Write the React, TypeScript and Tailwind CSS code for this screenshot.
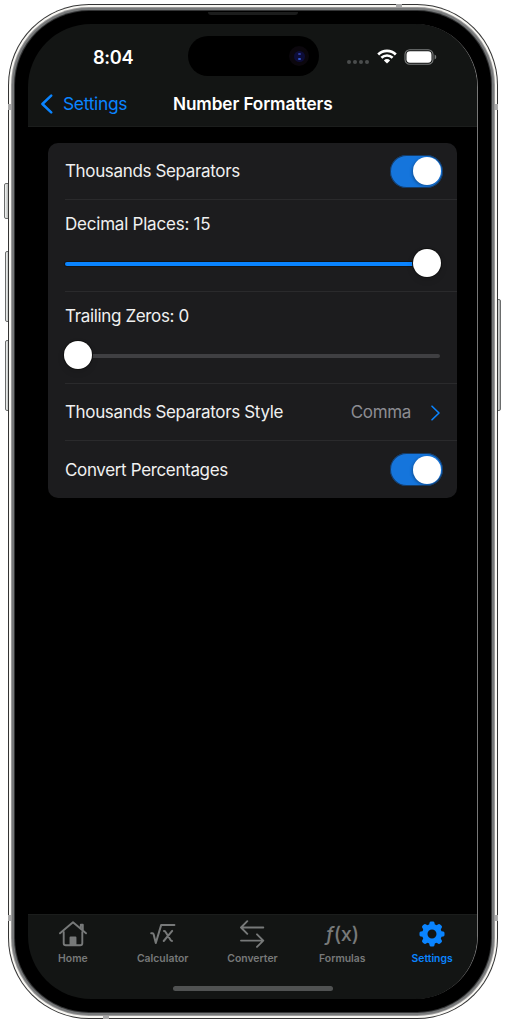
import type { ReactNode } from "react";

function StatusBar() {
  return (
    <div className="relative flex h-[58px] items-start">
      <span className="ml-[65px] mt-[20px] w-[42px] text-[18.2px] font-semibold leading-[27px] tracking-[-0.3px] text-white">
        8:04
      </span>
      <div className="ml-[53px] mt-[12px] flex h-[40px] w-[131px] items-center justify-end rounded-full bg-black pr-[10px]">
        <div className="flex h-[20px] w-[20px] items-center justify-center rounded-full bg-[#0b070d]">
          <div className="flex h-[11px] w-[11px] flex-col items-center justify-center gap-[3px] rounded-full bg-[#0d0d38]">
            <div className="h-[2px] w-[3px] rounded-full bg-[#2d3a9c]" />
            <div className="h-[2px] w-[3px] rounded-full bg-[#2f55c8]" />
          </div>
        </div>
      </div>
      <div className="ml-[28px] mt-[36px] flex gap-[2px]">
        <i className="h-1 w-1 rounded-full bg-[#4b4d4d]" />
        <i className="h-1 w-1 rounded-full bg-[#4b4d4d]" />
        <i className="h-1 w-1 rounded-full bg-[#4b4d4d]" />
        <i className="h-1 w-1 rounded-full bg-[#4b4d4d]" />
      </div>
      <svg className="ml-[8px] mt-[25px] shrink-0" width="20" height="15" viewBox="0 0 20 15" fill="none">
        <path d="M1.2 5.5A12.6 12.6 0 0 1 18.8 5.5" stroke="#fff" strokeWidth="2.7" />
        <path d="M4.4 8.8A8 8 0 0 1 15.6 8.8" stroke="#fff" strokeWidth="2.6" />
        <path d="M6.9 11.4A4.4 4.4 0 0 1 13.1 11.4L10 14.6Z" fill="#fff" />
      </svg>
      <svg className="ml-[7px] mt-[25px] shrink-0" width="33" height="16" viewBox="0 0 33 16" fill="none">
        <rect x="1" y="0.8" width="28" height="14.4" rx="4.8" stroke="#7b7d7d" strokeWidth="1.1" />
        <rect x="2.5" y="2.3" width="25" height="11.4" rx="3.4" fill="#fff" />
        <path d="M30.6 5.6Q32.3 6.3 32.3 8T30.6 10.4Z" fill="#7b7d7d" />
      </svg>
    </div>
  );
}

function NavBar() {
  return (
    <div className="grid h-[44px] grid-cols-[145px_1fr] items-center">
      <div className="flex items-center pl-[12px] text-[#0a84ff]">
        <svg width="14" height="20" viewBox="0 0 14 20" fill="none">
          <path d="M11.2 1.6L2.4 10L11.2 18.4" stroke="currentColor" strokeWidth="2.5" strokeLinecap="round" strokeLinejoin="round" />
        </svg>
        <span className="ml-[9px] text-[17.4px] tracking-[-0.3px]">Settings</span>
      </div>
      <span className="text-[17.2px] font-semibold tracking-[-0.1px] text-white">Number Formatters</span>
    </div>
  );
}

function Toggle() {
  return (
    <div className="flex h-[33px] w-[53px] items-center justify-end rounded-full bg-[#1575dc] pr-[2px] ring-1 ring-inset ring-[#15161a]/60">
      <div className="h-[28px] w-[28px] rounded-full bg-white shadow-[-1px_1px_3px_rgba(0,0,0,0.3)]" />
    </div>
  );
}

function Row({ label, children, last }: { label: string; children: ReactNode; last?: boolean }) {
  return (
    <div
      className={
        last
          ? "flex h-[57px] items-center justify-between pr-[14px]"
          : "flex h-[57px] items-center justify-between border-b border-[#2a2a2c] pr-[14px]"
      }
    >
      <span className="pt-[2px]">{label}</span>
      {children}
    </div>
  );
}

function SliderRow({ label, full }: { label: string; full?: boolean }) {
  return (
    <div className="h-[92px] border-b border-[#2a2a2c] pr-[16px] pt-[12px]">
      <div className={full ? "leading-[24px] tracking-[-0.22px]" : "leading-[24px]"}>{label}</div>
      <div className="mt-[13px] flex h-[28px] items-center">
        {full ? (
          <>
            <div className="mt-[2px] h-[4px] flex-1 rounded-l-full bg-[#0a84ff] ring-1 ring-[#111416]" />
            <div className="z-10 -ml-px h-[28px] w-[28px] shrink-0 rounded-full bg-white shadow-[0_0_0_1px_#111,0_3px_7px_rgba(0,0,0,0.12)]" />
          </>
        ) : (
          <>
            <div className="z-10 -ml-px h-[28px] w-[28px] shrink-0 rounded-full bg-white shadow-[0_0_0_1px_#111,0_3px_7px_rgba(0,0,0,0.12)]" />
            <div className="mr-px mt-[2px] h-[4px] flex-1 rounded-r-full bg-[#3f3f42]" />
          </>
        )}
      </div>
    </div>
  );
}

function HomeIcon() {
  return (
    <svg width="28" height="26" viewBox="0 0 28 26" fill="none" stroke="currentColor" strokeWidth="1.9" strokeLinecap="round" strokeLinejoin="round">
      <path d="M1 12.3L14 1.2L27 12.3M21.8 7.2V3.7H23.8V9.3" />
      <path d="M4.7 11V22.2Q4.7 24.3 6.8 24.3H21.2Q23.3 24.3 23.3 22.2V11" />
      <path d="M11.5 16.4H16.5V24H11.5Z" fill="currentColor" />
    </svg>
  );
}

function RootIcon() {
  return (
    <svg width="26" height="24" viewBox="0 0 26 24" fill="none" stroke="currentColor" strokeWidth="2" strokeLinecap="round" strokeLinejoin="round">
      <path d="M1.2 11.3H2.6Q3.3 11.3 3.6 12.3L5.8 21L11.2 2.9H24.4" />
      <path d="M14 8.9Q14.9 8.9 15.4 9.8L20.6 18Q21.2 19 22 19M22.2 8.9L13.7 19" />
    </svg>
  );
}

function ConvertIcon() {
  return (
    <svg width="26" height="28" viewBox="0 0 26 28" fill="none" stroke="currentColor" strokeWidth="1.9" strokeLinecap="round" strokeLinejoin="round">
      <path d="M24.3 7.5H2M8.3 1.2L2 7.5L8.3 13.8" />
      <path d="M2 20.6H24.3M18 14.3L24.3 20.6L18 26.9" />
    </svg>
  );
}

function GearIcon() {
  return (
    <svg width="26" height="26" viewBox="0 0 26 26" fill="none" stroke="currentColor">
      <circle cx="13" cy="13" r="7.2" strokeWidth="5.4" />
      <g strokeWidth="3" strokeLinejoin="round" fill="currentColor">
        <path d="M12 2H14L14.4 4H11.6ZM12 24H14L14.4 22H11.6ZM2 12V14L4 14.4V11.6ZM24 12V14L22 14.4V11.6Z" />
        <path d="M4.5 5.9L5.9 4.5L7.6 5.6L5.6 7.6ZM21.5 5.9L20.1 4.5L18.4 5.6L20.4 7.6ZM4.5 20.1L5.9 21.5L7.6 20.4L5.6 18.4ZM21.5 20.1L20.1 21.5L18.4 20.4L20.4 18.4Z" />
      </g>
    </svg>
  );
}

function Tab({ label, active, children }: { label: string; active?: boolean; children: ReactNode }) {
  return (
    <div className={active ? "flex w-[90px] flex-col items-center text-[#0a84ff]" : "flex w-[90px] flex-col items-center text-[#777979]"}>
      <div className="flex h-[38px] items-center justify-center">{children}</div>
      <span className="-mt-px text-[10.4px] font-semibold leading-[13px]">{label}</span>
    </div>
  );
}

function SideButton({ className }: { className: string }) {
  return <div className={"absolute border border-[#6a6c6c] bg-gradient-to-r from-[#f2f4f3] to-[#a6a9a8] " + className} />;
}

export default function App() {
  return (
    <div className="relative h-[1024px] w-[506px] overflow-hidden bg-white pl-[8px] pt-[4px] font-['Inter','Liberation_Sans',sans-serif]">
      <SideButton className="left-[4px] top-[183px] h-[36px] w-[6px] rounded-l-[2px]" />
      <SideButton className="left-[5px] top-[251px] h-[71px] w-[5px] rounded-l-[2px]" />
      <SideButton className="left-[5px] top-[340px] h-[71px] w-[5px] rounded-l-[2px]" />
      <SideButton className="left-[496px] top-[299px] h-[112px] w-[5px] rounded-r-[2px]" />

      <div className="relative h-[1015px] w-[490px] rounded-[81px] bg-[#343434] p-px">
        <div className="h-full rounded-[80px] bg-[#f8f7f3] p-[2px]">
          <div className="h-full rounded-[78px] bg-[#9c9b9b] p-px">
            <div className="h-full rounded-[77px] bg-[#767879] p-[2px]">
              <div className="h-full rounded-[75px] bg-[#343536] p-px">
                <div className="relative h-full rounded-[74px] bg-black px-[13px] py-[13px]">
                  <div className="absolute left-[193px] top-[1px] h-[3px] w-[90px] rounded-b-[3px] bg-[#1b1c1c]" />
                  <div className="h-full w-[450px] overflow-hidden rounded-[63px] border-r border-[#777] bg-black">
                    <div className="flex h-full flex-col">
                      <header className="h-[103px] shrink-0 border-b border-[#1b1d1c] bg-[#131514]">
                        <StatusBar />
                        <NavBar />
                      </header>
                      <main className="flex-1 pl-[20px] pt-[16px]">
                        <section className="h-[355px] w-[409px] rounded-[10px] bg-[#1c1c1e] pl-[17px] text-[17px] tracking-[-0.35px] text-[#f0f0f0]">
                          <Row label="Thousands Separators">
                            <Toggle />
                          </Row>
                          <SliderRow label="Decimal Places: 15" full />
                          <SliderRow label="Trailing Zeros: 0" />
                          <Row label="Thousands Separators Style">
                            <span className="flex items-center pt-[2px] text-[#8c8c92]">
                              Comma
                              <svg className="ml-[19px] mr-[2px]" width="11" height="16" viewBox="0 0 11 16" fill="none">
                                <path d="M2 1.2L9 8L2 14.8" stroke="#0a84ff" strokeWidth="1.6" strokeLinecap="round" strokeLinejoin="round" />
                              </svg>
                            </span>
                          </Row>
                          <Row label="Convert Percentages" last>
                            <Toggle />
                          </Row>
                        </section>
                      </main>
                      <footer className="h-[85px] shrink-0 border-t border-[#1b1d1c] bg-[#131514]">
                        <nav className="flex">
                          <Tab label="Home"><HomeIcon /></Tab>
                          <Tab label="Calculator"><RootIcon /></Tab>
                          <Tab label="Converter"><ConvertIcon /></Tab>
                          <Tab label="Formulas">
                            <span className="text-[20px] font-medium tracking-[-0.2px]"><i>ƒ</i>(x)</span>
                          </Tab>
                          <Tab label="Settings" active><GearIcon /></Tab>
                        </nav>
                        <div className="mx-auto mt-[21px] h-[5px] w-[160px] rounded-full bg-[#505252]" />
                      </footer>
                    </div>
                  </div>
                </div>
              </div>
            </div>
          </div>
        </div>
        <div className="absolute left-0 top-[100px] h-[6px] w-[3px] bg-[#aaa]" />
        <div className="absolute right-0 top-[100px] h-[6px] w-[3px] bg-[#aaa]" />
        <div className="absolute left-0 top-[911px] h-[6px] w-[3px] bg-[#aaa]" />
        <div className="absolute right-0 top-[911px] h-[6px] w-[3px] bg-[#aaa]" />
        <div className="absolute left-[388px] top-0 h-[3px] w-[6px] bg-[#aaa]" />
        <div className="absolute bottom-0 left-[95px] h-[3px] w-[6px] bg-[#aaa]" />
      </div>
    </div>
  );
}
